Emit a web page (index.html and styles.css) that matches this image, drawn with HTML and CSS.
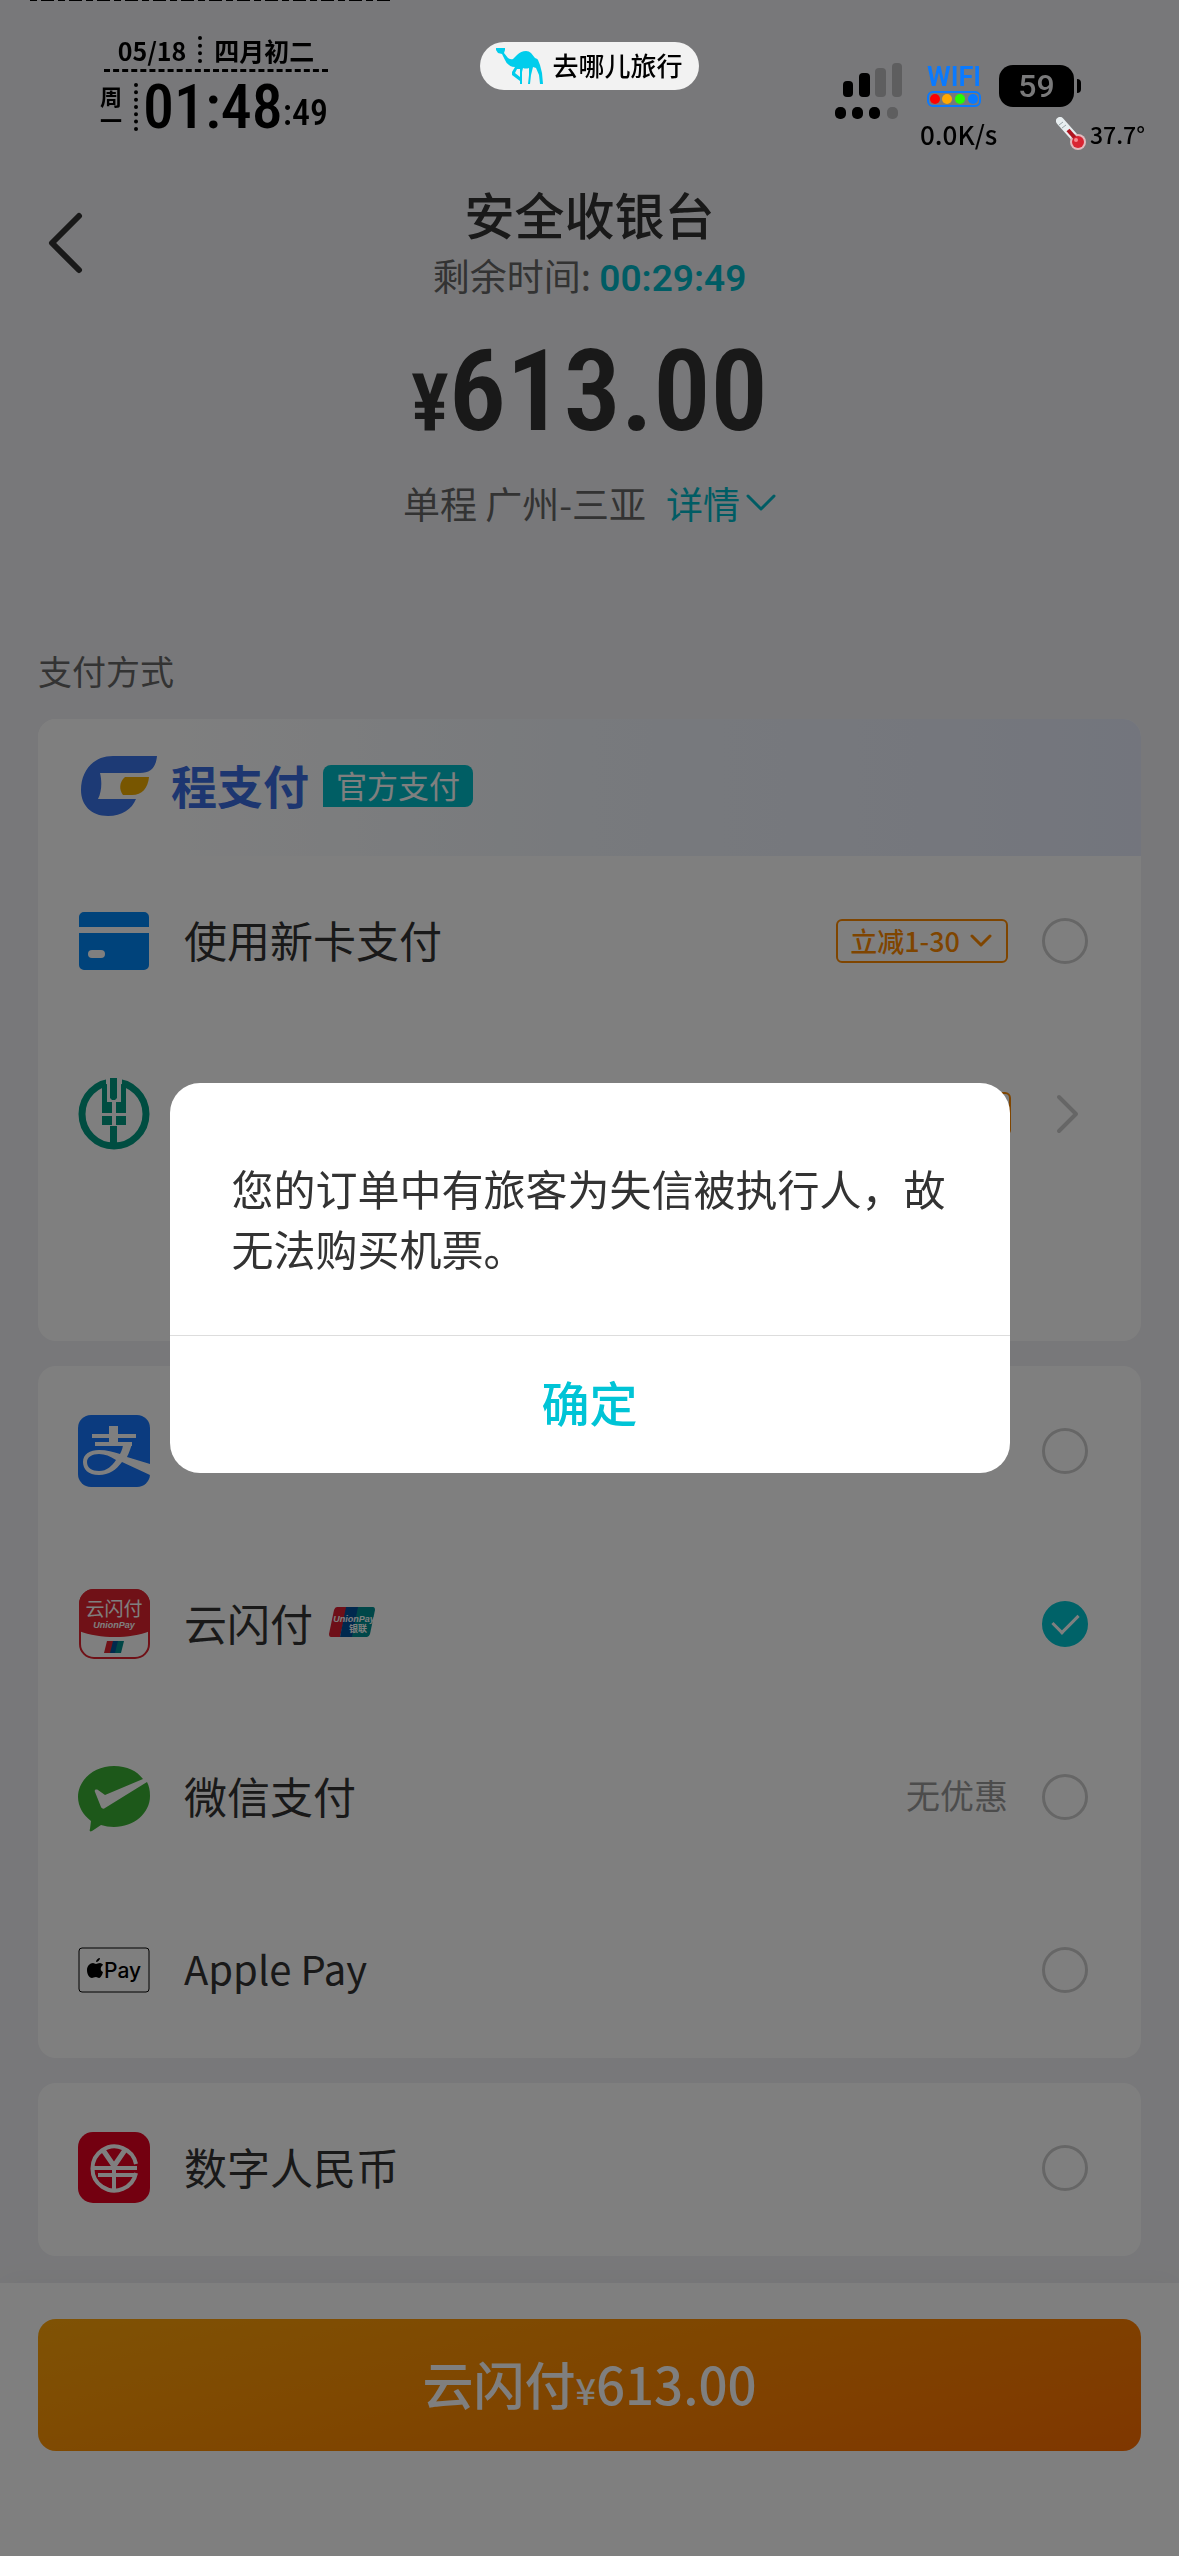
FILE: index.html
```html
<!DOCTYPE html>
<html lang="zh-CN">
<head>
  <meta charset="UTF-8">
  <meta name="viewport" content="width=device-width, initial-scale=1.0">
  <title>安全收银台</title>
  <link rel="stylesheet" href="styles.css">
</head>
<body>
  <!-- Status bar -->
  <div class="status-bar">
    <div class="clock">
      <div class="clock-date"><span>05/18</span><i class="dots"></i><span>四月初二</span></div>
      <div class="clock-row">
        <span class="weekday">周一</span>
        <i class="dots"></i>
        <span class="clock-time">01:48</span><span class="clock-sec">:49</span>
      </div>
    </div>

    <div class="app-pill">
      <svg width="48" height="36" viewBox="0 0 48 36">
        <path fill="#00cdec" d="M0 0h9v2L8 5l4 5q3 2 5 1l4-4q4-4 9-4 3 0 5 2l4 5q3 1 3 2l2 5 2 8 1 11h-3l-1-9-3-7-3-1-2 8-1 9h-2l1-9v-7q-3 1-6 0l-1 4v12h-2v-3l-8-6v-3l3-5q-4 0-6-2-3-2-4-5L6 6 2 5 0 2zM21 21l-2 4 5 4v-8z" fill-rule="evenodd"/>
      </svg>
      <span>去哪儿旅行</span>
    </div>

    <div class="indicators">
      <svg class="signal" width="68" height="56" viewBox="0 0 68 56">
        <rect x="8" y="18" width="10" height="16" rx="4"/>
        <rect x="24" y="10" width="11" height="24" rx="4"/>
        <rect x="40" y="5" width="11" height="29" rx="4" fill="#5e5e5f"/>
        <rect x="57" y="0" width="10" height="34" rx="4" fill="#5e5e5f"/>
        <rect x="0" y="44" width="11" height="12" rx="5"/>
        <rect x="17" y="44" width="11" height="12" rx="5"/>
        <rect x="34" y="44" width="11" height="12" rx="5"/>
        <rect x="52" y="44" width="11" height="12" rx="5" fill="#5e5e5f"/>
      </svg>
      <div class="readings">
        <div class="reading-row">
          <div class="wifi">
            <span>WIFI</span>
            <svg width="54" height="16" viewBox="0 0 54 16">
              <rect x="1" y="1" width="52" height="14" rx="5" fill="none" stroke="#0a7aff" stroke-width="2"/>
              <circle cx="8" cy="8" r="5" fill="#f00"/>
              <circle cx="20" cy="8" r="5" fill="#ffa800"/>
              <circle cx="33" cy="8" r="5" fill="#2f0"/>
              <circle cx="46" cy="8" r="5" fill="#0a7aff"/>
            </svg>
          </div>
          <div class="battery">59</div>
        </div>
        <div class="reading-row">
          <span>0.0K/s</span>
          <span class="temp">
            <svg width="30" height="34" viewBox="0 0 30 34">
              <path d="M4 4L20 22" stroke="#e8eef0" stroke-width="8" stroke-linecap="round"/>
              <circle cx="22" cy="25" r="8" fill="#e3b9bd"/>
              <path d="M12 13L20 22" stroke="#b01420" stroke-width="4"/>
              <circle cx="22" cy="25" r="6" fill="#d92432"/>
              <circle cx="20" cy="23" r="2" fill="#f58a90"/>
              <path d="M3 8l4-3M6 11l4-3" stroke="#9aa6aa" stroke-width="1"/>
            </svg>
            37.7°
          </span>
        </div>
      </div>
    </div>
  </div>

  <!-- Cashier page -->
  <div class="page">
    <header class="header">
      <button class="back" type="button" aria-label="返回">
        <svg width="36" height="62" viewBox="0 0 36 62" fill="none" stroke="#333" stroke-width="6" stroke-linecap="round" stroke-linejoin="round"><path d="M31 4L4 31l27 27"/></svg>
      </button>
      <h1 class="title">安全收银台</h1>
      <p class="remaining">剩余时间: <strong>00:29:49</strong></p>
      <p class="amount"><span class="yen">¥</span>613.00</p>
      <p class="trip">单程 广州-三亚
        <a href="#">详情<svg width="30" height="20" viewBox="0 0 30 20" fill="none" stroke="#00b8c8" stroke-width="3" stroke-linecap="round" stroke-linejoin="round"><path d="M2 3l13 13L28 3"/></svg></a>
      </p>
    </header>

    <main class="methods">
      <h2 class="section-title">支付方式</h2>

      <section class="card card-bank">
        <div class="brand">
          <svg width="76" height="60" viewBox="0 0 76 60">
            <path d="M32 0h44c-1 11-6 17-17 17H19c2 8 2 18-2 26h38c-4 10-14 17-28 17C10 60 0 49 0 34 0 15 12 0 32 0z" fill="#3b74ea"/>
            <path d="M44 21h24c-1 11-7 18-17 18h-9c-4-5-4-13 2-18z" fill="#f0ac00"/>
          </svg>
          <span class="brand-name">程支付</span>
          <span class="brand-tag">官方支付</span>
        </div>
        <div class="row">
          <svg class="icon" viewBox="0 0 72 72">
            <path d="M6 7h60a5 5 0 0 1 5 5v10H1V12a5 5 0 0 1 5-5zM1 28h70v32a5 5 0 0 1-5 5H6a5 5 0 0 1-5-5z" fill="#0086f6"/>
            <rect x="10" y="45" width="17" height="8" rx="4" fill="#fff"/>
          </svg>
          <label class="name" for="pay-card">使用新卡支付</label>
          <button class="badge" type="button">立减1-30
            <svg width="22" height="14" viewBox="0 0 22 14" fill="none" stroke="#ff8a00" stroke-width="3" stroke-linecap="round" stroke-linejoin="round"><path d="M2 2l9 9 9-9"/></svg>
          </button>
          <input class="radio" type="radio" name="pay" id="pay-card">
        </div>
        <a class="row" href="#" aria-label="银行卡">
          <svg class="icon" viewBox="0 0 72 72">
            <circle cx="36" cy="36" r="32" fill="none" stroke="#009a82" stroke-width="7"/>
            <path d="M28 0h16v12H28z" fill="#fff"/>
            <path d="M24 7l5-1v18h5v11H24zM48 7l-5-1v18h-5v11h10zM32 0h7v20l-2 2h-3l-2-2zM24 38h10v9H24zM38 38h10v9H38zM32 48h7v19h-7z" fill="#009a82"/>
          </svg>
          <span class="name"></span>
          <span class="badge badge-empty"></span>
          <svg class="arrow" width="46" height="42" viewBox="0 0 46 42" fill="none" stroke="#ccc" stroke-width="4" stroke-linecap="round" stroke-linejoin="round"><path d="M17 4l17 17-17 17"/></svg>
        </a>
      </section>

      <section class="card">
        <div class="row">
          <svg class="icon" viewBox="0 0 72 72">
            <rect width="72" height="72" rx="13" fill="#1677ff"/>
            <g fill="#fff">
              <path d="M31 11h9v18h-9zM14 19h44v4H14zM17 27h37v4H17z"/>
              <path d="M45 29h9c-2 6-3 9-5 13l23 7v11L44 47c-6 8-13 13-23 13C10 60 5 54 5 47c0-8 7-12 16-12 8 0 14 2 21 4 2-4 3-7 3-10zM21 39c-7 0-12 3-12 8 0 6 5 9 12 9 8 0 13-5 17-11-6-4-11-6-17-6z"/>
            </g>
          </svg>
          <span class="name"></span>
          <input class="radio" type="radio" name="pay" aria-label="支付宝">
        </div>
        <div class="row">
          <svg class="icon" viewBox="0 0 72 72">
            <rect x="2" y="2" width="69" height="68" rx="14" fill="#fff" stroke="#e0232e" stroke-width="2"/>
            <path d="M1 43V16A15 15 0 0 1 16 1h41a15 15 0 0 1 15 15v27c-20 8-50 8-71 0z" fill="#e0232e"/>
            <text x="36" y="28" class="logo-cn" font-size="19" text-anchor="middle" fill="#fff">云闪付</text>
            <text x="36" y="40" class="logo-en" font-size="9" text-anchor="middle" fill="#fff">UnionPay</text>
            <path d="M29 53h7l-3 12h-7z" fill="#e0232e"/><path d="M35 53h6l-3 12h-6z" fill="#00529b"/><path d="M40 53h6l-3 12h-6z" fill="#008c8c"/>
          </svg>
          <label class="name" for="pay-union">云闪付
            <svg class="unionpay" width="46" height="30" viewBox="0 0 46 30">
              <path d="M8 0h10l-7 30H2q-2 0-2-3L5 3q1-3 3-3z" fill="#dc1f30"/>
              <path d="M17 0h13l-6 30H11z" fill="#00509c"/>
              <path d="M29 0h15q2 0 2 3l-5 24q-1 3-3 3H23z" fill="#008f93"/>
              <text x="25" y="15" class="logo-en" font-size="9" text-anchor="middle" fill="#fff">UnionPay</text>
              <text x="29" y="25" class="logo-cn" font-size="9" font-weight="700" text-anchor="middle" fill="#fff">银联</text>
            </svg>
          </label>
          <input class="radio" type="radio" name="pay" id="pay-union" checked>
        </div>
        <div class="row">
          <svg class="icon" viewBox="0 0 72 72">
            <path d="M36 5c13 0 23 5 29 13L27 34l-7-5c-2-1-4 0-3 2l6 15c1 2 3 2 4 1l42-26c2 4 3 8 3 14 0 17-16 31-36 31-5 0-9-1-13-2l-9 6c-2 1-3 0-2-2l1-8C5 54 0 45 0 36 0 19 16 5 36 5z" fill="#3bb035"/>
          </svg>
          <label class="name" for="pay-wechat">微信支付</label>
          <span class="note">无优惠</span>
          <input class="radio" type="radio" name="pay" id="pay-wechat">
        </div>
        <div class="row">
          <svg class="icon" viewBox="0 0 72 72">
            <rect x="1" y="14" width="70" height="44" rx="3" fill="#fff" stroke="#000" stroke-width="1"/>
            <path d="M18 28c0-2 2-4 4-4 0 2-2 4-4 4zM9 36c0-4 3-7 6-7 1 0 2 1 3 1 1 0 2-1 4-1 1 0 3 1 3 2-3 2-3 6 0 7-1 4-3 6-4 6-1 0-2-1-3-1-2 0-3 1-4 1-3 0-5-4-5-8z"/>
            <text x="26" y="44" font-size="21" class="logo-apple">Pay</text>
          </svg>
          <label class="name name-latin" for="pay-apple">Apple Pay</label>
          <input class="radio" type="radio" name="pay" id="pay-apple">
        </div>
      </section>

      <section class="card">
        <div class="row">
          <svg class="icon" viewBox="0 0 72 72">
            <rect width="72" height="71" rx="15" fill="#e60020"/>
            <g fill="none" stroke="#fff" stroke-width="4">
              <path d="M58 32A22 22 0 1 0 58 41"/>
              <path d="M14 36h45M20 43h38M36 34v24"/>
              <path d="M25 18l11 16 11-16" stroke-width="5"/>
            </g>
          </svg>
          <label class="name" for="pay-ecny">数字人民币</label>
          <input class="radio" type="radio" name="pay" id="pay-ecny">
        </div>
      </section>
    </main>

    <footer class="footer">
      <button class="pay-button" type="button">云闪付<span>¥</span>613.00</button>
    </footer>
  </div>

  <!-- Alert -->
  <div class="overlay">
    <div class="dialog" role="alertdialog" aria-describedby="alert-text">
      <p class="dialog-text" id="alert-text">您的订单中有旅客为失信被执行人&#65292;故无法购买机票。</p>
      <button class="dialog-button" type="button">确定</button>
    </div>
  </div>
</body>
</html>
```

FILE: styles.css
```css
* {
  margin: 0;
  padding: 0;
  box-sizing: border-box;
}

body {
  background: #f1f1f4;
  color: #333;
  font-family: 'Noto Sans CJK SC', 'Noto Sans', sans-serif;
  font-size: 43px;
}

button {
  border: none;
  background: none;
  font-family: inherit;
  cursor: pointer;
}

a {
  color: inherit;
  text-decoration: none;
}

svg {
  flex: none;
}

/* status bar sits above the dimmed page */
.status-bar {
  position: absolute;
  z-index: 20;
  top: 0;
  left: 0;
  right: 0;
  display: grid;
  grid-template-columns: 1fr auto 1fr;
  align-items: start;
  padding: 36px 34px 0;
  color: #000;
  font-weight: 500;
}

.status-bar::before {
  content: '';
  position: absolute;
  top: 0;
  left: 30px;
  width: 360px;
  height: 1px;
  background: repeating-linear-gradient(90deg, #000 0 7px, transparent 7px 11px, #000 11px 24px, transparent 24px 28px);
}

.clock {
  justify-self: start;
  margin-left: 66px;
}

.clock-date {
  display: flex;
  align-items: center;
  justify-content: center;
  gap: 12px;
  height: 36px;
  margin-left: 4px;
  border-bottom: 3px dashed #000;
  font-size: 25px;
  font-weight: 700;
  line-height: 28px;
}

.clock-date span {
  padding-bottom: 6px;
}

.dots {
  align-self: stretch;
  border-left: 4px dotted #000;
}

.clock-date .dots {
  margin-bottom: 6px;
}

.clock-row {
  display: flex;
  align-items: center;
  height: 48px;
  margin-top: 11px;
}

.weekday {
  width: 22px;
  margin-right: 12px;
  font-size: 22px;
  font-weight: 700;
  line-height: 24px;
}

.clock-time {
  margin-left: 5px;
  font-family: 'Roboto Condensed', Roboto, sans-serif;
  font-size: 62px;
  line-height: 50px;
}

.clock-sec {
  align-self: flex-end;
  font-family: 'Roboto Condensed', Roboto, sans-serif;
  font-size: 36px;
  line-height: 36px;
}

.app-pill {
  display: flex;
  align-items: center;
  gap: 8px;
  height: 48px;
  margin-top: 6px;
  padding: 0 16px;
  border-radius: 24px;
  background: #f2f2f2;
  font-size: 26px;
}

.app-pill span {
  padding-bottom: 3px;
}

.indicators {
  display: flex;
  justify-self: end;
  gap: 17px;
  margin-top: 27px;
}

.readings {
  display: flex;
  flex-direction: column;
  width: 225px;
  gap: 10px;
  margin-top: 2px;
}

.reading-row {
  display: flex;
  align-items: center;
  justify-content: space-between;
  font-size: 26px;
  line-height: 34px;
}

.wifi {
  display: flex;
  flex-direction: column;
  align-items: center;
  gap: 2px;
  margin-left: 7px;
  color: #0a7aff;
  font-family: Roboto, sans-serif;
  font-size: 27px;
  font-weight: 600;
  line-height: 24px;
}

.battery {
  position: relative;
  width: 75px;
  margin-right: 71px;
  border-radius: 14px;
  background: #000;
  color: #79797a;
  font-family: Roboto, sans-serif;
  font-size: 32px;
  line-height: 42px;
  text-align: center;
}

.battery::after {
  content: '';
  position: absolute;
  top: 14px;
  right: -7px;
  width: 4px;
  height: 14px;
  border-radius: 0 4px 4px 0;
  background: #000;
}

.temp {
  display: flex;
  align-items: center;
  gap: 4px;
  font-size: 23px;
}

/* page */
.page {
  display: flex;
  flex-direction: column;
  min-height: 100vh;
}

.header {
  position: relative;
  padding-top: 183px;
  text-align: center;
}

.back {
  position: absolute;
  top: 211px;
  left: 48px;
  height: 68px;
}

.title {
  font-size: 50px;
  font-weight: 500;
  line-height: 60px;
}

.remaining {
  color: #666;
  font-size: 37px;
  line-height: 64px;
}

.remaining strong {
  color: #00b8c8;
  font-family: Roboto, sans-serif;
  font-weight: 600;
}

.amount {
  margin-top: 16px;
  font-family: 'Liberation Sans Narrow', 'Roboto Condensed', Roboto, sans-serif;
  font-size: 114px;
  font-weight: 600;
  line-height: 128px;
}

.yen {
  font-size: 80px;
}

.trip {
  display: flex;
  align-items: center;
  justify-content: center;
  gap: 20px;
  margin-top: 4px;
  color: #666;
  font-size: 37px;
  line-height: 64px;
}

.trip a {
  display: flex;
  align-items: center;
  gap: 6px;
  color: #00b8c8;
}

.methods {
  display: flex;
  flex-direction: column;
  gap: 25px;
  padding: 113px 38px 27px;
}

.section-title {
  color: #666;
  font-size: 34px;
  font-weight: 400;
  line-height: 46px;
}

.card {
  overflow: hidden;
  border-radius: 18px;
  background: #fff;
}

.card-bank {
  padding-bottom: 139px;
}

.brand {
  display: flex;
  align-items: center;
  height: 137px;
  padding: 0 0 4px 43px;
  background: linear-gradient(90deg, #fff 10%, #f0f4fa 50%, #ebeffa 80%, #e6ebfa);
}

.brand-name {
  margin-left: 14px;
  padding-bottom: 4px;
  color: #3b6de0;
  font-size: 46px;
  font-weight: 700;
}

.brand-tag {
  margin-left: 14px;
  padding: 0 13px 2px;
  border-radius: 8px 8px 8px 0;
  background: #00bcc8;
  color: #fff;
  font-size: 31px;
  line-height: 40px;
}

.row {
  display: flex;
  align-items: center;
  height: 173px;
  padding: 0 53px 4px 40px;
}

.icon {
  width: 72px;
  height: 72px;
}

.name {
  display: flex;
  flex: 1;
  align-items: center;
  gap: 16px;
  margin-left: 34px;
  padding-bottom: 4px;
}

.name-latin {
  font-size: 40px;
}

.badge {
  display: flex;
  align-items: center;
  gap: 10px;
  height: 44px;
  margin-right: 34px;
  padding: 0 14px 0 12px;
  border: 2px solid #ff8a00;
  border-radius: 6px;
  color: #ff8a00;
  font-size: 27px;
  font-weight: 500;
  line-height: 36px;
}

.badge-empty {
  width: 172px;
  margin-right: 31px;
}

.note {
  margin-right: 34px;
  padding-bottom: 4px;
  color: #999;
  font-size: 34px;
}

.radio {
  display: grid;
  place-items: center;
  width: 46px;
  height: 46px;
  border: 3px solid #ccc;
  border-radius: 50%;
  appearance: none;
}

.radio:checked {
  border-color: #00c4d0;
  background: #00c4d0;
}

.radio:checked::before {
  content: '';
  width: 22px;
  height: 12px;
  margin-bottom: 6px;
  border: solid #fff;
  border-width: 0 0 3px 3px;
  transform: rotate(-45deg);
}

.logo-cn {
  font-family: 'Noto Sans CJK SC', sans-serif;
}

.logo-en {
  font-family: 'Liberation Sans', sans-serif;
  font-style: italic;
  font-weight: 700;
}

.logo-apple {
  font-family: Inter, sans-serif;
  font-weight: 500;
}

.footer {
  flex: 1;
  padding: 36px 38px 0;
  background: #fff;
  box-shadow: 0 0 30px rgba(0, 0, 0, 0.04);
}

.pay-button {
  width: 100%;
  height: 132px;
  padding-bottom: 4px;
  border-radius: 18px;
  background: linear-gradient(165deg, #ffa50a, #ff8a00 50%, #ff6e00);
  color: #fff;
  font-size: 51px;
  font-weight: 500;
}

.pay-button span {
  font-size: 36px;
}

/* alert */
.overlay {
  position: fixed;
  z-index: 10;
  inset: 0;
  display: flex;
  align-items: center;
  justify-content: center;
  background: rgba(0, 0, 0, 0.5);
}

.dialog {
  width: 840px;
  max-width: 90%;
  overflow: hidden;
  border-radius: 30px;
  background: #fff;
}

.dialog-text {
  padding: 75px 62px 57px;
  font-size: 42px;
  line-height: 60px;
}

.dialog-button {
  width: 100%;
  height: 138px;
  padding-bottom: 8px;
  border-top: 1px solid #ddd;
  color: #00c4d6;
  font-size: 48px;
  font-weight: 500;
}
```
